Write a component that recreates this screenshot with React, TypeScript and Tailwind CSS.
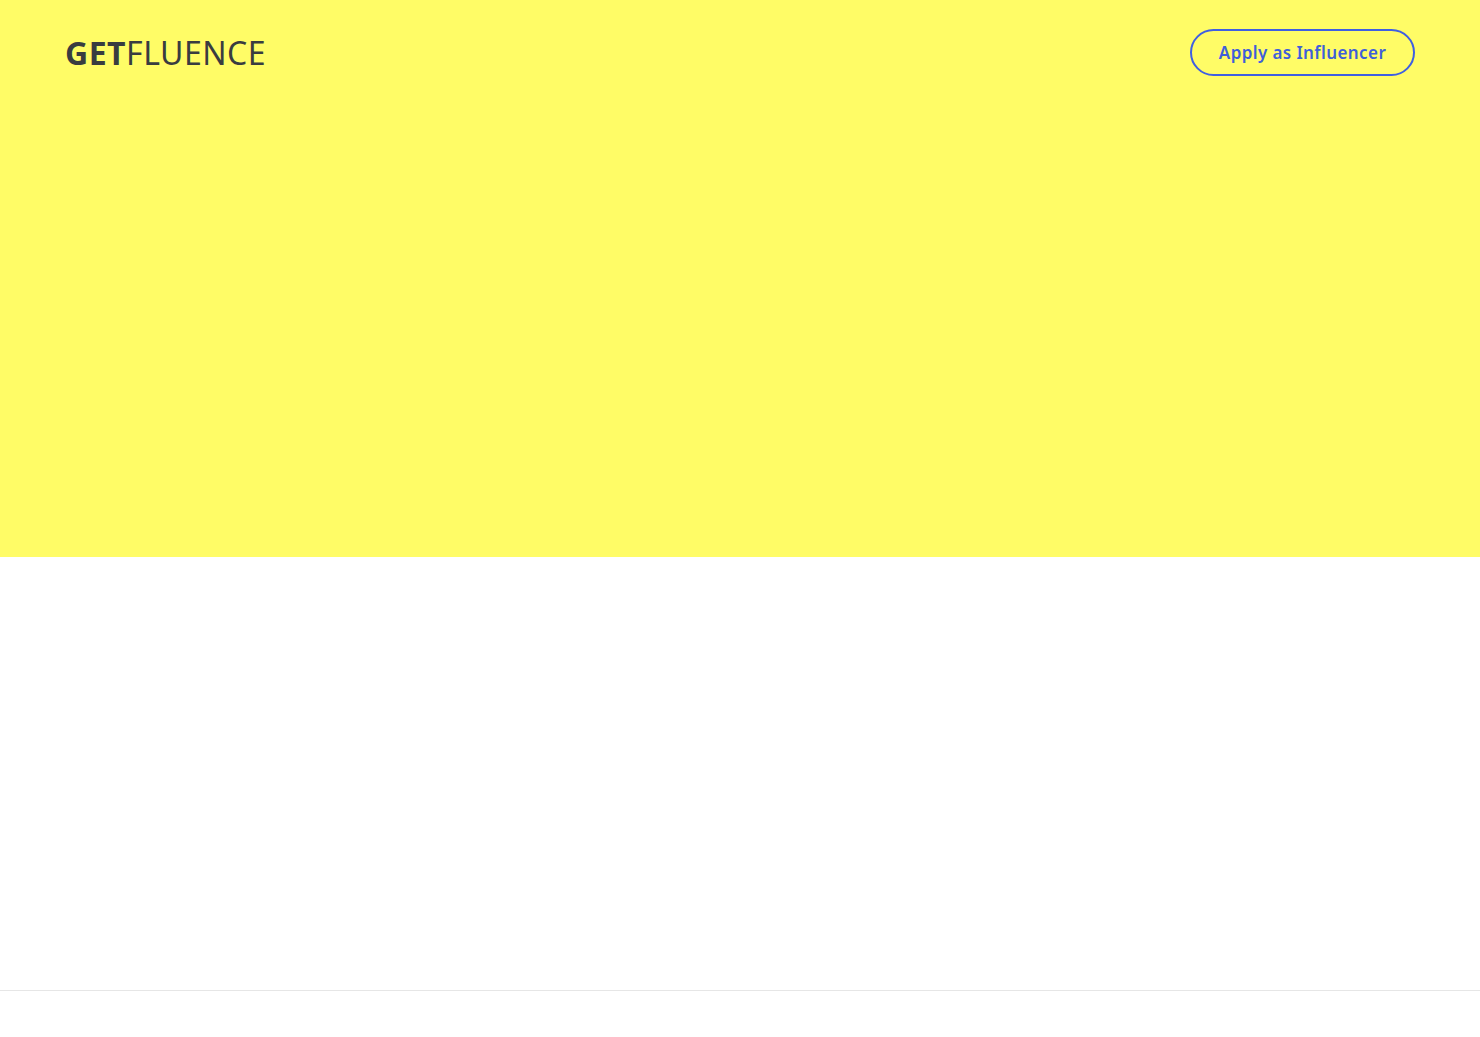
import React from 'react';

const App: React.FC = () => {
  return (
    <div className="min-h-screen bg-white font-['Noto_Sans','Open_Sans',sans-serif]">
      <header className="h-[557px] bg-[#fffc66]">
        <div className="flex items-center justify-between pl-[65px] pr-[65px] pt-[29px]">
          <a href="#" className="text-[32px] leading-none tracking-[0.5px] text-[#393c40]">
            <span className="font-bold">GET</span>
            <span className="font-normal">FLUENCE</span>
          </a>
          <button className="h-[47px] w-[225px] rounded-full border-2 border-[#3f5fe2] text-[17px] font-semibold tracking-[0.4px] text-[#3f5fd9]">
            Apply as Influencer
          </button>
        </div>
      </header>
      <main className="h-[433px]" />
      <footer className="h-[47px] border-t border-[#e6e6e6]" />
    </div>
  );
};

export default App;
